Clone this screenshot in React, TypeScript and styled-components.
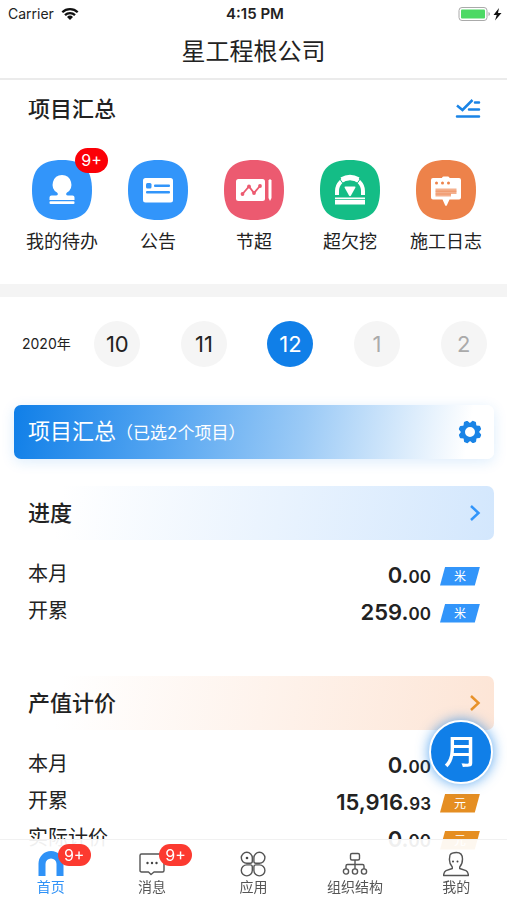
import React from "react";
import styled, { createGlobalStyle } from "styled-components";

const GlobalStyle = createGlobalStyle`
  *, *::before, *::after { box-sizing: border-box; }
  body {
    margin: 0;
    background: #fff;
    color: #222;
    font-family: Inter, "Noto Sans CJK SC", sans-serif;
  }
  button { font: inherit; color: inherit; border: 0; padding: 0; background: none; cursor: pointer; }
  h1, h2, dl, dd, dt { margin: 0; font-weight: 400; }
  svg { display: block; flex: none; }
`;

const Screen = styled.div`
  height: 100vh;
  display: flex;
  flex-direction: column;
  overflow: hidden;
`;

const StatusBar = styled.div`
  flex: none;
  display: grid;
  grid-template-columns: 1fr auto 1fr;
  align-items: center;
  height: 28px;
  padding: 0 5px 0 8px;
  font-size: 14px;
  line-height: 20px;
  color: #222;
`;

const Carrier = styled.span`
  display: flex;
  align-items: center;
  gap: 7px;
`;

const Clock = styled.span`
  font-size: 15px;
  font-weight: 600;
`;

const Power = styled.span`
  display: flex;
  justify-content: flex-end;
`;

const TitleBar = styled.header`
  flex: none;
  display: flex;
  justify-content: center;
  height: 52px;
  padding-top: 7px;
  border-bottom: 2px solid #ebebeb;
`;

const PageTitle = styled.h1`
  font-size: 24px;
  line-height: 34px;
`;

const Content = styled.main`
  flex: 1;
  min-height: 0;
  overflow: hidden;
`;

const Summary = styled.section`
  padding-bottom: 29px;
  border-bottom: 13px solid #f4f4f4;
`;

const SummaryHead = styled.div`
  display: flex;
  align-items: center;
  justify-content: space-between;
  height: 58px;
  padding: 0 26px 0 28px;
`;

const Heading = styled.h2`
  font-size: 22px;
  line-height: 32px;
  font-weight: 500;
`;

const AppGrid = styled.nav`
  display: grid;
  grid-template-columns: repeat(5, 1fr);
  padding: 22px 13px 0 14px;
`;

const AppButton = styled.button`
  display: flex;
  flex-direction: column;
  align-items: center;
  gap: 9px;
  font-size: 18px;
  line-height: 26px;
`;

const Anchor = styled.span`
  position: relative;
  display: block;
`;

const AppBadge = styled.span`
  position: absolute;
  top: -12px;
  right: -16px;
  width: 33px;
  border-radius: 13px;
  background: #fb0007;
  color: #fff;
  font-size: 16px;
  line-height: 25px;
  text-align: center;
`;

const TabBadge = styled(AppBadge)`
  top: -7px;
  right: -27px;
  background: #fc3a30;
  line-height: 22px;
`;

const Months = styled.section`
  display: grid;
  grid-template-columns: 74px repeat(5, 1fr);
  align-items: center;
  padding-top: 24px;
`;

const Year = styled.span`
  padding-left: 22px;
  font-size: 14px;
  line-height: 20px;
  white-space: nowrap;
`;

const Month = styled.button<{ $state?: "active" | "later" }>`
  justify-self: center;
  width: 46px;
  height: 46px;
  border-radius: 50%;
  font-size: 22px;
  line-height: 46px;
  background: ${(p) => (p.$state === "active" ? "#107fe8" : "#f5f5f5")};
  color: ${(p) => (p.$state === "active" ? "#fff" : p.$state === "later" ? "#aaa" : "#222")};
`;

const Panels = styled.div`
  padding: 38px 13px 0 14px;
`;

const Banner = styled.section`
  display: flex;
  align-items: center;
  justify-content: space-between;
  height: 54px;
  padding: 0 12px 0 14px;
  border-radius: 7px;
  background: linear-gradient(100deg, #107fe8 0%, #56a6f1 32%, #9bcaf6 60%, #fff 94%);
  box-shadow: 0 3px 14px rgba(16, 127, 232, 0.14);
  color: #fff;
`;

const BannerText = styled.h2`
  font-size: 22px;
  line-height: 32px;
  small { font-size: 17px; }
`;

const Card = styled.section`
  & + & { margin-top: 43px; }
`;

const CardHead = styled.button<{ $tint: string }>`
  display: flex;
  align-items: center;
  justify-content: space-between;
  width: 100%;
  height: 54px;
  padding: 0 12px 0 14px;
  border-radius: 7px;
  background: linear-gradient(100deg, #fff 10%, ${(p) => p.$tint} 100%);
`;

const Cards = styled.div`
  padding-top: 27px;
`;

const Rows = styled.dl`
  padding: 15px 14px 4px;
`;

const Row = styled.div`
  display: flex;
  justify-content: space-between;
  height: 37px;
`;

const RowLabel = styled.dt`
  font-size: 20px;
  line-height: 38px;
`;

const RowValue = styled.dd`
  display: flex;
  align-items: center;
  gap: 9px;
  height: 42px;
`;

const Amount = styled.span`
  font-size: 22px;
  line-height: 30px;
  font-weight: 600;
  small { font-size: 17px; }
`;

const Unit = styled.span<{ $color: string }>`
  width: 40px;
  clip-path: polygon(13% 0, 100% 0, 87% 100%, 0 100%);
  background: ${(p) => p.$color};
  color: #fff;
  font-size: 12px;
  line-height: 19px;
  text-align: center;
`;

const MonthToggle = styled.button`
  position: fixed;
  right: 14px;
  bottom: 116px;
  width: 64px;
  height: 64px;
  border: 2px solid #fff;
  border-radius: 50%;
  background: #107fe8;
  box-shadow: 0 0 13px rgba(16, 127, 232, 0.7);
  color: #fff;
  font-size: 34px;
  font-weight: 500;
  line-height: 60px;
`;

const TabBar = styled.nav`
  position: fixed;
  left: 0;
  right: 0;
  bottom: 0;
  display: grid;
  grid-template-columns: repeat(5, 1fr);
  height: 61px;
  padding-top: 11px;
  border-top: 1px solid #f1f1f1;
  background: rgba(255, 255, 255, 0.93);
`;

const Tab = styled.button<{ $active?: boolean }>`
  display: flex;
  flex-direction: column;
  align-items: center;
  font-size: 14px;
  line-height: 20px;
  color: ${(p) => (p.$active ? "#2f92f7" : "#555")};
`;

const TILE = "M30 0C51 0 60 9 60 30S51 60 30 60 0 51 0 30 9 0 30 0Z";

const Tile = ({ color, children }: { color: string; children: React.ReactNode }) => (
  <svg width="60" height="60" viewBox="0 0 60 60" aria-hidden="true">
    <path d={TILE} fill={color} />
    {children}
  </svg>
);

const StampIcon = () => (
  <Tile color="#3295fa">
    <g fill="#fff">
      <path d="M30 15a9.500 9.500 0 0 0-5 17.500c1.500 1 1 3-1 3h-4.500a2 2 0 0 0-2 2v2.500h25v-2.500a2 2 0 0 0-2-2H36c-2 0-2.500-2-1-3A9.500 9.500 0 0 0 30 15Z" />
      <rect x="17.500" y="41.200" width="25" height="2.800" rx="1" />
    </g>
  </Tile>
);

const NoticeIcon = () => (
  <Tile color="#3295fa">
    <rect x="15" y="18" width="30" height="24.500" rx="2.500" fill="#fff" />
    <g fill="#3295fa">
      <rect x="18" y="23" width="5.500" height="5.500" rx="1.500" />
      <rect x="26" y="24.500" width="16" height="2.500" rx="1" />
      <rect x="18" y="31" width="24" height="2.500" rx="1" />
    </g>
  </Tile>
);

const TrendIcon = () => (
  <Tile color="#ec5a70">
    <rect x="12" y="19" width="29" height="22" rx="2.500" fill="#fff" />
    <path d="M44.500 20.500q1.500-2.500 3 0v17.500l-1.500 3-1.500-3Z" fill="#fff" />
    <path d="M18.500 34l6.500-7.500 5 6.500 6-7" fill="none" stroke="#ec5a70" strokeWidth="1.800" />
    <g fill="#ec5a70">
      <circle cx="18.500" cy="34" r="1.900" />
      <circle cx="25" cy="26.500" r="1.900" />
      <circle cx="30" cy="33" r="1.900" />
      <circle cx="36" cy="26" r="1.900" />
    </g>
  </Tile>
);

const GaugeIcon = () => (
  <Tile color="#14bd86">
    <path d="M17 35v-4a13 13 0 0 1 26 0v4" fill="none" stroke="#fff" strokeWidth="4" />
    <path d="M20.500 17.500q9.500-5.500 19 0l-2.500 4.500q-7-3.500-14 0Z" fill="#fff" />
    <path d="M19 18l4 5.500M41 18l-4 5.500" stroke="#14bd86" strokeWidth="1" />
    <path d="M25.500 26.500h9q1.500 0 .8 1.300l-4.300 7.700q-1 1.500-2 0l-4.300-7.700q-.7-1.300.8-1.300Z" fill="#fff" />
    <path d="M15 37.500h30v1.700H15zM15 40h30v4.500H15z" fill="#fff" />
  </Tile>
);

const LogIcon = () => (
  <Tile color="#ed824a">
    <path d="M17 18h9q0-1.500 1.500-1.500h4.500q1.500 0 1.500 1.500H43q2 0 2 2v17.500q0 2-2 2h-9.500l-2.500 5.500q-1 2-2 0l-2.500-5.500H17q-2 0-2-2V20q0-2 2-2Z" fill="#fff" />
    <g fill="#ed824a">
      <circle cx="20.500" cy="23" r="1.500" />
      <circle cx="26.500" cy="23" r="1.500" />
      <circle cx="32.500" cy="23" r="1.500" />
    </g>
    <path d="M19.500 28.500h21v5.500h-5.500v2.500H19.500Z" fill="#f4b08e" />
    <path d="M19.500 31.200h21M19.500 34h15.500" stroke="#ed824a" strokeWidth=".6" />
  </Tile>
);

const WifiIcon = () => (
  <svg width="18" height="14" viewBox="0 0 18 14" aria-label="Wi-Fi">
    <g fill="none" stroke="#111" strokeWidth="2.300">
      <path d="M1.300 5.200a11 11 0 0 1 15.400 0" />
      <path d="M4 8.200a7.200 7.200 0 0 1 10 0" />
    </g>
    <path d="M9 13l-3-3a4.300 4.300 0 0 1 6 0Z" fill="#111" />
  </svg>
);

const BatteryIcon = () => (
  <svg width="44" height="16" viewBox="0 0 44 16" aria-label="Battery charging">
    <rect x="1" y="1.500" width="28" height="13" rx="3" fill="#fff" stroke="#aaa" />
    <rect x="3" y="3.500" width="24" height="9" rx="1" fill="#4cd964" />
    <path d="M30.500 6v4q1.500-.5 1.500-2t-1.500-2Z" fill="#aaa" />
    <path d="M41 2L35.500 9h3.200l-1.700 5.500L43.500 7h-3.500Z" fill="#111" />
  </svg>
);

const ChecklistIcon = () => (
  <svg width="26" height="22" viewBox="0 0 26 22" aria-hidden="true">
    <g fill="none" stroke="#1a84e6" strokeWidth="2.500">
      <path d="M2 7.500l5.500 4.500L17.500 2" />
      <path d="M20 4.500h4M14 11.500h10M2 18.500H24" strokeLinecap="round" />
    </g>
  </svg>
);

const GEAR_TEETH = [0, 45, 90, 135, 180, 225, 270, 315];

const GearIcon = () => (
  <svg width="24" height="24" viewBox="0 0 24 24" aria-hidden="true">
    <g fill="#1a84e6">
      {GEAR_TEETH.map((a) => (
        <path key={a} d="M7.800 5L10 1Q10.300 .5 11 .5h2q.7 0 1 .5L16.200 5Z" transform={`rotate(${a + 22} 12 12)`} />
      ))}
    </g>
    <circle cx="12" cy="12" r="7" fill="#fff" stroke="#1a84e6" strokeWidth="4" />
  </svg>
);

const Chevron = ({ color }: { color: string }) => (
  <svg width="14" height="18" viewBox="0 0 14 18" aria-hidden="true">
    <path d="M3 2l7.500 7L3 16" fill="none" stroke={color} strokeWidth="2.500" />
  </svg>
);

const line = { fill: "none", stroke: "#555", strokeWidth: 1.4, strokeLinejoin: "round" as const };

const HomeIcon = () => (
  <svg width="26" height="26" viewBox="0 0 26 26" aria-hidden="true">
    <path d="M.5 25V12.500a12.500 12.500 0 0 1 25 0V25h-7V13a5.500 5.500 0 0 0-11 0v12Z" fill="#2f92f7" />
  </svg>
);

const MessageIcon = () => (
  <svg width="26" height="26" viewBox="0 0 26 26" aria-hidden="true">
    <path d="M2.500 3h21q1.500 0 1.500 1.500v15q0 1.500-1.500 1.500H15l-3 2.500L9.500 21h-7Q1 21 1 19.500v-15Q1 3 2.500 3Z" {...line} />
    <g fill="#444">
      <circle cx="8.500" cy="12" r="1.200" />
      <circle cx="13" cy="12" r="1.200" />
      <circle cx="17.500" cy="12" r="1.200" />
    </g>
  </svg>
);

const AppsIcon = () => (
  <svg width="26" height="26" viewBox="0 0 26 26" aria-hidden="true">
    <g {...line}>
      <path d="M12.300 6.800a5.500 5.500 0 1 0-5.500 5.500h3.500q2 0 2-2Z" />
      <path d="M13.900 6.800a5.500 5.500 0 1 1 5.500 5.500h-3.500q-2 0-2-2Z" />
      <path d="M12.300 19.400a5.500 5.500 0 1 1-5.500-5.500h3.500q2 0 2 2Z" />
      <path d="M13.900 19.400a5.500 5.500 0 1 0 5.500-5.500h-3.500q-2 0-2 2Z" />
    </g>
    <circle cx="7" cy="7" r="1.300" fill="#444" />
  </svg>
);

const OrgIcon = () => (
  <svg width="26" height="26" viewBox="0 0 26 26" aria-hidden="true">
    <g {...line}>
      <rect x="8.500" y="2.500" width="9" height="6.500" rx="1.500" />
      <path d="M13 9v9M4 18v-3q0-1.500 1.500-1.500h15q1.500 0 1.500 1.500v3" />
      <circle cx="4" cy="20.500" r="2.600" />
      <circle cx="13" cy="20.500" r="2.600" />
      <circle cx="22" cy="20.500" r="2.600" />
    </g>
  </svg>
);

const PersonIcon = () => (
  <svg width="26" height="26" viewBox="0 0 26 26" aria-hidden="true">
    <path d="M7 4q1.500-2.500 6.500-2.500 6 0 6 6.500 0 5-2.800 8v1.500l6.300 2.200q2 .8 2.500 4.800h-25q.5-4 2.500-4.800l6.300-2.200V16Q6 12.500 6.500 7.500Z" {...line} />
    <circle cx="10" cy="10.500" r="1" fill="#444" />
    <circle cx="14.500" cy="10.500" r="1" fill="#444" />
  </svg>
);

const APPS = [
  { name: "我的待办", icon: <StampIcon />, badge: "9+" },
  { name: "公告", icon: <NoticeIcon /> },
  { name: "节超", icon: <TrendIcon /> },
  { name: "超欠挖", icon: <GaugeIcon /> },
  { name: "施工日志", icon: <LogIcon /> },
];

const MONTHS: { n: number; state?: "active" | "later" }[] = [
  { n: 10 },
  { n: 11 },
  { n: 12, state: "active" },
  { n: 1, state: "later" },
  { n: 2, state: "later" },
];

const CARDS = [
  {
    title: "进度",
    tint: "#d3e7fd",
    arrow: "#3295fa",
    color: "#3295fa",
    unit: "米",
    rows: [["本月", "0.", "00"], ["开累", "259.", "00"]],
  },
  {
    title: "产值计价",
    tint: "#fde5d6",
    arrow: "#e8922a",
    color: "#e58e22",
    unit: "元",
    rows: [["本月", "0.", "00"], ["开累", "15,916.", "93"], ["实际计价", "0.", "00"]],
  },
];

const TABS = [
  { name: "首页", icon: <HomeIcon />, badge: "9+", active: true },
  { name: "消息", icon: <MessageIcon />, badge: "9+" },
  { name: "应用", icon: <AppsIcon /> },
  { name: "组织结构", icon: <OrgIcon /> },
  { name: "我的", icon: <PersonIcon /> },
];

export default function App() {
  return (
    <Screen>
      <GlobalStyle />
      <StatusBar>
        <Carrier>Carrier <WifiIcon /></Carrier>
        <Clock>4:15 PM</Clock>
        <Power><BatteryIcon /></Power>
      </StatusBar>
      <TitleBar><PageTitle>星工程根公司</PageTitle></TitleBar>
      <Content>
        <Summary>
          <SummaryHead>
            <Heading>项目汇总</Heading>
            <button aria-label="编辑"><ChecklistIcon /></button>
          </SummaryHead>
          <AppGrid>
            {APPS.map((a) => (
              <AppButton key={a.name}>
                <Anchor>{a.icon}{a.badge && <AppBadge>{a.badge}</AppBadge>}</Anchor>
                {a.name}
              </AppButton>
            ))}
          </AppGrid>
        </Summary>
        <Months>
          <Year>2020年</Year>
          {MONTHS.map((m) => (
            <Month key={m.n} $state={m.state}>{m.n}</Month>
          ))}
        </Months>
        <Panels>
          <Banner>
            <BannerText>项目汇总<small>（已选2个项目）</small></BannerText>
            <button aria-label="设置"><GearIcon /></button>
          </Banner>
          <Cards>
            {CARDS.map((c) => (
              <Card key={c.title}>
                <CardHead $tint={c.tint}>
                  <Heading as="span">{c.title}</Heading>
                  <Chevron color={c.arrow} />
                </CardHead>
                <Rows>
                  {c.rows.map(([label, whole, cents]) => (
                    <Row key={label}>
                      <RowLabel>{label}</RowLabel>
                      <RowValue>
                        <Amount>{whole}<small>{cents}</small></Amount>
                        <Unit $color={c.color}>{c.unit}</Unit>
                      </RowValue>
                    </Row>
                  ))}
                </Rows>
              </Card>
            ))}
          </Cards>
        </Panels>
      </Content>
      <MonthToggle>月</MonthToggle>
      <TabBar>
        {TABS.map((t) => (
          <Tab key={t.name} $active={t.active}>
            <Anchor>{t.icon}{t.badge && <TabBadge>{t.badge}</TabBadge>}</Anchor>
            {t.name}
          </Tab>
        ))}
      </TabBar>
    </Screen>
  );
}
